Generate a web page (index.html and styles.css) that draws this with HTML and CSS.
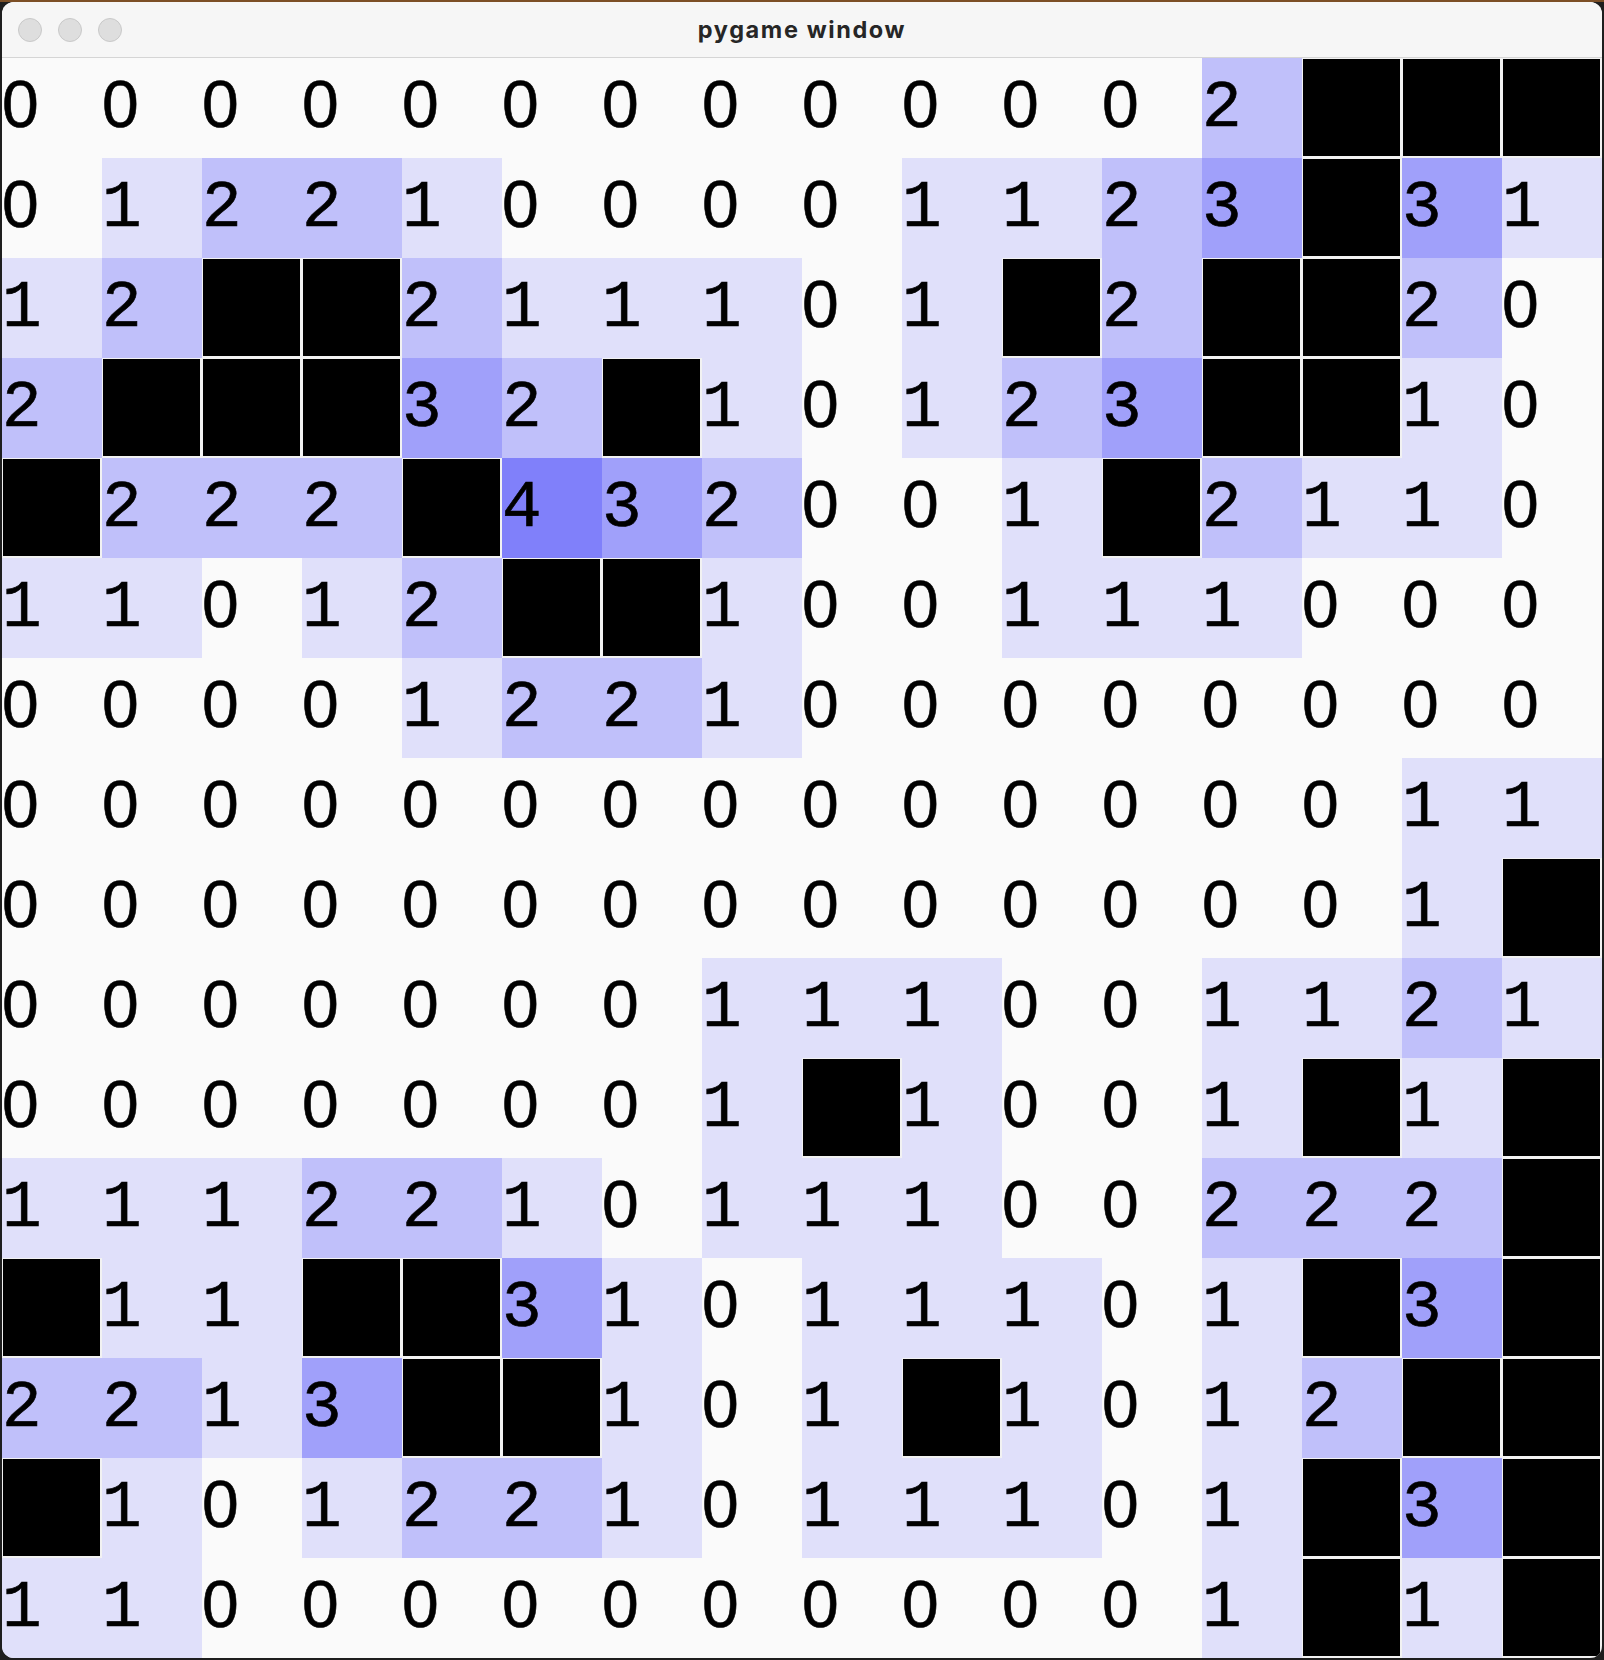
FILE: index.html
```html
<html>
<head>
  <link rel="stylesheet" href="styles.css">
</head>
<body>
  <div class="window">
    <div class="titlebar">
      <div class="lights">
        <span class="light"></span>
        <span class="light"></span>
        <span class="light"></span>
      </div>
      <div class="title">pygame window</div>
      <div></div>
    </div>
    <div class="board" id="board"></div>
  </div>
  <script>
    // x = covered cell, digits = neighbour count
    var rows = [
      "0000000000002xxx",
      "0122100001123x31",
      "12xx211101x2xx20",
      "2xxx32x10123xx10",
      "x222x432001x2110",
      "11012xx100111000",
      "0000122100000000",
      "0000000000000011",
      "000000000000001x",
      "0000000111001121",
      "00000001x1001x1x",
      "111221011100222x",
      "x11xx31011101x3x",
      "2213xx101x1012xx",
      "x101221011101x3x",
      "1100000000001x1x"
    ];

    var html = '';
    for (var r = 0; r < rows.length; r++) {
      for (var c = 0; c < rows[r].length; c++) {
        var ch = rows[r][c];
        if (ch === 'x') {
          html += '<div class="cell mine"></div>';
        } else {
          html += '<div class="cell v' + ch + '">' + ch + '</div>';
        }
      }
    }
    document.getElementById('board').innerHTML = html;
  </script>
</body>
</html>
```

FILE: styles.css
```css
body {
  margin: 0;
  height: 1660px;
  overflow: hidden;
  background-color: #1e1e1e;
  background-image: linear-gradient(#7c4f26 0, #7c4f26 2px, transparent 2px);
}
.window {
  margin: 2px;
  width: 1600px;
  height: 1656px;
  border-radius: 12px;
  overflow: hidden;
  background: #fafafa;
}
.titlebar {
  height: 55px;
  border-bottom: 1px solid #d5d5d5;
  background: #f6f6f6;
  display: grid;
  grid-template-columns: 1fr auto 1fr;
  align-items: center;
}
.lights {
  display: flex;
  gap: 16px;
  padding-left: 16px;
}
.light {
  width: 22px;
  height: 22px;
  border-radius: 50%;
  background: #dedede;
  border: 1px solid #c9c9c9;
}
.title {
  font-family: Inter, "Liberation Sans", sans-serif;
  font-weight: 700;
  font-size: 23.5px;
  letter-spacing: 1.6px;
  color: #262626;
}
.board {
  display: grid;
  grid-template-columns: repeat(16, 100px);
  grid-auto-rows: 100px;
}
.cell {
  box-sizing: border-box;
  padding-top: 13px;
  font-family: "Liberation Mono", monospace;
  font-size: 66px;
  line-height: normal;
  color: #000;
  -webkit-text-stroke: 0.6px #000;
}
.v0 {
  background: #fafafa;
  font-family: "Liberation Sans", sans-serif;
  padding-top: 8px;
}
.v1 { background: #e0e0fa; }
.v2 { background: #c0c0fa; }
.v3 { background: #a0a0fa; }
.v4 { background: #8080fa; }
.mine {
  background: #000;
  border: solid #f2f2f2;
  border-width: 1px 2px 2px 1px;
}
```
